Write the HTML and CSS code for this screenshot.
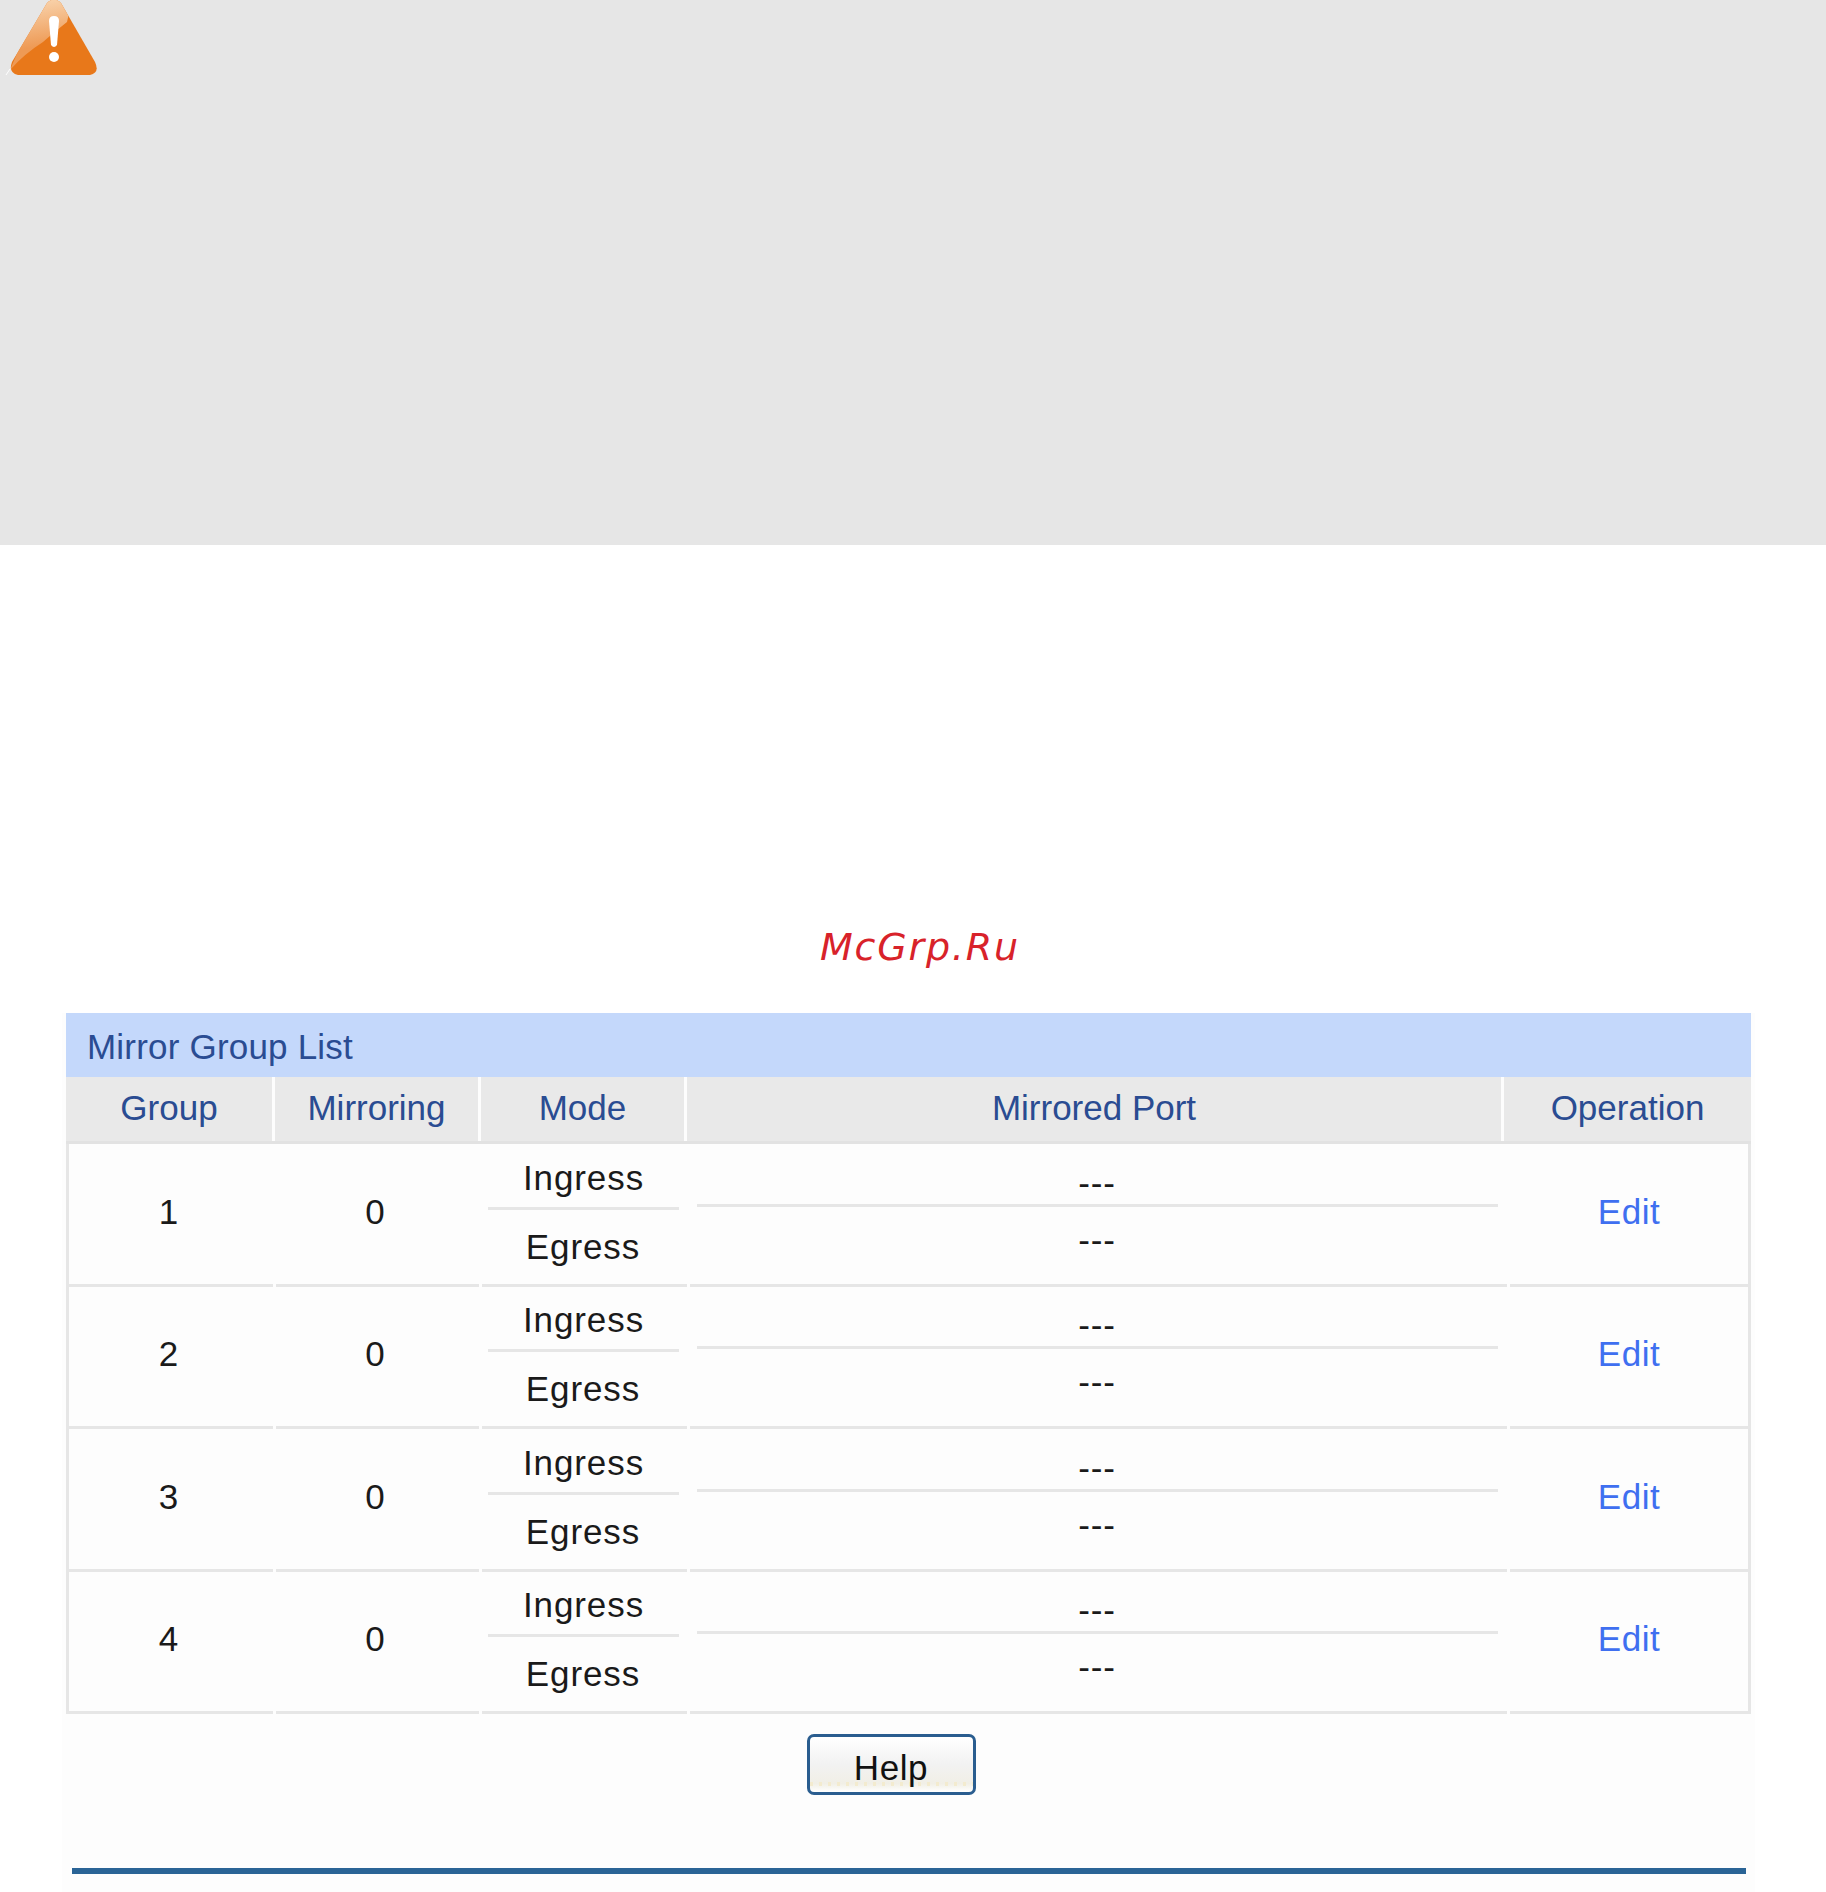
FILE: index.html
```html
<!DOCTYPE html>
<html lang="en">
<head>
<meta charset="utf-8">
<title>Mirror Group List</title>
<link rel="stylesheet" href="styles.css">
</head>
<body>
<section class="warning">
  <svg class="warn-icon" viewBox="0 0 110 80" width="110" height="80" aria-hidden="true">
    <defs>
      <linearGradient id="gloss" x1="35" y1="4" x2="42" y2="46" gradientUnits="userSpaceOnUse">
        <stop offset="0" stop-color="#f8cfa6"/>
        <stop offset="1" stop-color="#ee9a55"/>
      </linearGradient>
      <clipPath id="tri"><path d="M47 3Q54-4 61 3L95 62Q100 73 90 75L18 75Q8 73 12 62Z"/></clipPath>
    </defs>
    <path d="M47 3Q54-4 61 3L95 62Q100 73 90 75L18 75Q8 73 12 62Z" fill="#e8781a"/>
    <path d="M40 0H72L67 22Q52 34 43 42Q24 54 10 70Z" fill="url(#gloss)" clip-path="url(#tri)"/>
    <path d="M49 21Q49 16 54 16Q59 16 59 21L57 45Q54 49 51 45Z" fill="#fff"/>
    <circle cx="54" cy="57" r="5" fill="#fff"/>
    <path d="M6 75L10 69" stroke="#fff" stroke-width="1"/>
  </svg>
</section>

<div class="watermark-band"><span class="watermark">McGrp.Ru</span></div>

<main class="panel">
  <div class="list">
    <h2 class="list-title">Mirror Group List</h2>
    <div class="row head">
      <div class="cell">Group</div>
      <div class="cell">Mirroring</div>
      <div class="cell">Mode</div>
      <div class="cell">Mirrored Port</div>
      <div class="cell">Operation</div>
    </div>
    <div class="rows">
      <div class="row body">
        <div class="cell num">1</div>
        <div class="cell num">0</div>
        <div class="cell mode"><div class="sub in">Ingress</div><div class="sub eg">Egress</div></div>
        <div class="cell port"><div class="sub in">---</div><div class="sub eg">---</div></div>
        <div class="cell op"><a href="#">Edit</a></div>
      </div>
      <div class="row body">
        <div class="cell num">2</div>
        <div class="cell num">0</div>
        <div class="cell mode"><div class="sub in">Ingress</div><div class="sub eg">Egress</div></div>
        <div class="cell port"><div class="sub in">---</div><div class="sub eg">---</div></div>
        <div class="cell op"><a href="#">Edit</a></div>
      </div>
      <div class="row body">
        <div class="cell num">3</div>
        <div class="cell num">0</div>
        <div class="cell mode"><div class="sub in">Ingress</div><div class="sub eg">Egress</div></div>
        <div class="cell port"><div class="sub in">---</div><div class="sub eg">---</div></div>
        <div class="cell op"><a href="#">Edit</a></div>
      </div>
      <div class="row body">
        <div class="cell num">4</div>
        <div class="cell num">0</div>
        <div class="cell mode"><div class="sub in">Ingress</div><div class="sub eg">Egress</div></div>
        <div class="cell port"><div class="sub in">---</div><div class="sub eg">---</div></div>
        <div class="cell op"><a href="#">Edit</a></div>
      </div>
    </div>
  </div>
  <div class="actions"><button class="help" type="button">Help</button></div>
  <div class="rule"></div>
</main>
</body>
</html>
```

FILE: styles.css
```css
* { box-sizing: border-box; }
html, body { margin: 0; padding: 0; }
body {
  width: 1826px;
  height: 1892px;
  overflow: hidden;
  background: #fff;
  font-family: "Liberation Sans", Arial, sans-serif;
  font-size: 35px;
  color: #1a1a1a;
}
.warning {
  height: 545px;
  background: #e6e6e6;
}
.warn-icon { display: block; }
.watermark-band {
  height: 468px;
  padding: 380px 0 0 820px;
}
.watermark {
  display: block;
  font-family: "DejaVu Sans", sans-serif;
  font-style: oblique;
  font-size: 38px;
  line-height: 44px;
  letter-spacing: 1.8px;
  color: #d8222a;
}
.panel {
  margin-left: 62px;
  width: 1693px;
  height: 879px;
  padding-left: 4px;
  background: #fdfdfd;
}
.list { width: 1685px; }
.list-title {
  margin: 0;
  height: 64px;
  padding-left: 21px;
  background: #c4d8fb;
  font-size: 35px;
  font-weight: 400;
  line-height: 67px;
  letter-spacing: .2px;
  color: #2a4c92;
}
.row {
  display: grid;
  column-gap: 3px;
}
.head {
  grid-template-columns: 206px 203px 203px 814px 1fr;
  height: 67px;
  border-bottom: 3px solid #e2e2e2;
}
.head .cell {
  background: #e9e9e9;
  text-align: center;
  line-height: 62px;
  color: #2a4c92;
}
.rows {
  border-left: 3px solid #e6e6e6;
  border-right: 3px solid #e6e6e6;
}
.body {
  grid-template-columns: 204px 203px 205px 817px 1fr;
  height: 142.4px;
}
.body .cell {
  border-bottom: 3px solid #e6e6e6;
  text-align: center;
}
.num, .op { line-height: 136px; }
.num { padding-right: 5px; }
.op a { color: #3f6ff0; text-decoration: none; letter-spacing: .5px; }
.mode, .port { display: flex; flex-direction: column; letter-spacing: .9px; }
.sub { flex: none; }
.mode .in {
  height: 66px;
  margin: 0 8px 0 6px;
  line-height: 67px;
  border-bottom: 3px solid #e6e6e6;
}
.mode .eg { height: 74px; padding-right: 3px; line-height: 74px; }
.port .in {
  height: 63px;
  margin: 0 9px 0 7px;
  padding-right: 1px;
  line-height: 78px;
  border-bottom: 3px solid #e6e6e6;
}
.port .eg { height: 74px; padding-right: 3px; line-height: 65px; }
.actions {
  height: 154.4px;
  padding: 20.4px 0 0 740.5px;
}
.help {
  display: block;
  width: 169px;
  height: 61px;
  padding: 7px 0 0;
  font: inherit;
  letter-spacing: .6px;
  color: #111;
  border: 3px solid #2a5d8f;
  border-radius: 7px;
  background:
    repeating-linear-gradient(90deg, #f3ebcf 0 3px, transparent 3px 9px) 0 45px / 100% 4px no-repeat,
    linear-gradient(#fff 0%, #f2f2f2 50%, #f1efe6 85%, #fff 100%);
}
.rule {
  width: 1674px;
  height: 6px;
  margin-left: 6px;
  background: #2a6496;
}
```
